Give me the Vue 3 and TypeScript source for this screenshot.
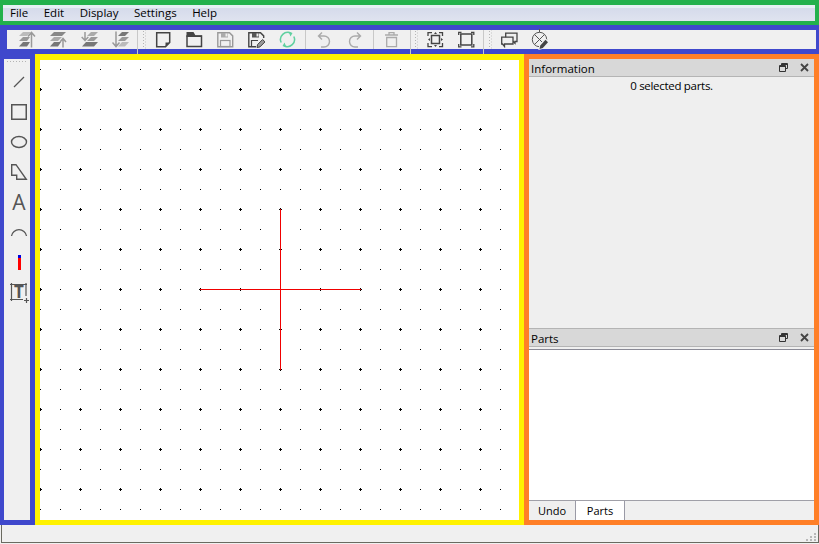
<script setup lang="ts">
import { computed } from 'vue'

const menus = ['File', 'Edit', 'Display', 'Settings', 'Help']

const gridPath = computed(() => {
  const parts: string[] = []
  for (let y = 69; y <= 509; y += 20) {
    for (let x = 40; x <= 500; x += 20) {
      const px = x - 40
      const py = y - 60
      const big = (y - 89) % 40 === 0 && (x - 40) % 40 === 0 && x <= 480
      if (big) {
        parts.push(`M${px - 1} ${py}h3v1h-3zM${px} ${py - 1}h1v3h-1z`)
      } else {
        parts.push(`M${px} ${py}h1v1h-1z`)
      }
    }
  }
  return parts.join('')
})
</script>

<template>
  <div class="app">
    <nav class="menubar">
      <span v-for="m in menus" :key="m" class="menu-item">{{ m }}</span>
    </nav>

    <div class="toolbar">
      <span class="btn"><svg viewBox="0 0 17 17"><path d="M4 1h8l-4 4H0z" fill="#bbb"/><path d="M4 6h7l-3 4H0z" fill="#999"/><path d="M4 11h7l-3 4.500H0z" fill="#777"/><path d="M12.500 16.500V1.500M9 5.500l3.500-4 3.500 4" fill="none" stroke="#999" stroke-width="1.500"/></svg></span>
      <span class="btn"><svg viewBox="0 0 17 17"><path d="M4 1h12l-4 4H0z" fill="#888"/><path d="M4 6h8l-4 4H0z" fill="#aaa"/><path d="M4 11h7l-3 4.500H0z" fill="#777"/><path d="M13 16.500V7.500M10 11l3-3.500 3 3.500" fill="none" stroke="#999" stroke-width="1.500"/></svg></span>
      <span class="btn"><svg viewBox="0 0 17 17"><path d="M10 1h7l-4 4H6z" fill="#aaa"/><path d="M10 6h7l-4 4H6z" fill="#999"/><path d="M5 11h12l-4 4.500H1z" fill="#777"/><path d="M4 1v8.500M.7 6 4 9.500 7.300 6" fill="none" stroke="#999" stroke-width="1.500"/></svg></span>
      <span class="btn"><svg viewBox="0 0 17 17"><path d="M10 1h7l-4 4H6z" fill="#777"/><path d="M10 6h7l-4 4H6z" fill="#999"/><path d="M10 11h7l-4 4.500H6z" fill="#bbb"/><path d="M4 .5v15M.5 11.500 4 15.500l3.500-4" fill="none" stroke="#999" stroke-width="1.500"/></svg></span>
      <i class="sep long first"></i>
      <i class="handle h10"></i>
      <span class="btn"><svg viewBox="0 0 17 17"><path d="M1.700 1.700H14.700V11.500L10.500 15.700H1.700Z" fill="none" stroke="#444" stroke-width="1.500"/><path d="M10.500 15.500V11.500H14.500Z" fill="#444"/></svg></span>
      <span class="btn"><svg viewBox="0 0 17 17"><path d="M.5 1h7l2 3.500h6.500V6H.5z" fill="#444"/><rect x="1" y="5" width="14.500" height="10.500" fill="none" stroke="#444" stroke-width="1.500"/></svg></span>
      <span class="btn"><svg viewBox="0 0 17 17"><path d="M.8 1.700H12.500L15.700 4.900V15.700H.8Z" fill="none" stroke="#999" stroke-width="1.400"/><rect x="4" y="2" width="7" height="4.500" fill="#aaa"/><rect x="8.500" y="2.500" width="2" height="3" fill="#eee"/><rect x="3.500" y="9.500" width="9.500" height="6" fill="none" stroke="#999" stroke-width="1.200"/></svg></span>
      <span class="btn"><svg viewBox="0 0 17 17"><path d="M8 15.700H.8V1.700H12.500L15.700 4.900V7" fill="none" stroke="#444" stroke-width="1.400"/><rect x="4" y="2" width="7" height="4.500" fill="#555"/><rect x="8.500" y="2.500" width="2" height="3" fill="#eee"/><path d="M3.500 15V9.500H10" fill="none" stroke="#444" stroke-width="1.200"/><path d="M9 16.500l.6-3 5-5 2.400 2.400-5 5z" fill="#999" stroke="#444"/></svg></span>
      <span class="btn"><svg viewBox="0 0 17 17"><g fill="none" stroke="#5fd0a0" stroke-width="1.500"><path d="M2.200 11.500A7 7 0 0 1 12 2.400"/><path d="M14.800 5.500A7 7 0 0 1 5 14.600"/></g><path d="M9.500 .5 13.500 2l-2 3.500zM7.500 16.500 3.500 15l2-3.500z" fill="#5fd0a0"/></svg></span>
      <i class="sep short a"></i>
      <span class="btn"><svg viewBox="0 0 17 17"><path d="M7 1.500 3.500 5 7 8.500M3.500 5H9A5.500 5.500 0 0 1 9 16H6" fill="none" stroke="#aaa" stroke-width="1.400"/></svg></span>
      <span class="btn"><svg viewBox="0 0 17 17"><path transform="translate(18 0) scale(-1 1)" d="M7 1.500 3.500 5 7 8.500M3.500 5H9A5.500 5.500 0 0 1 9 16H6" fill="none" stroke="#aaa" stroke-width="1.400"/></svg></span>
      <i class="sep short b"></i>
      <span class="btn"><svg viewBox="0 0 17 17"><g fill="none" stroke="#aaa" stroke-width="1.300"><path d="M2 4h13M6 3.500V1.700h5v1.800"/><path d="M3.700 6.500H13.500V15.700H3.700Z"/></g></svg></span>
      <i class="sep long c"></i>
      <i class="handle h9"></i>
      <span class="btn"><svg viewBox="0 0 17 17"><g fill="none" stroke="#444" stroke-width="1.300"><path d="M1 5V1.600H5M12 1.600H15.500V5M15.500 12V15.600H12M5 15.600H1V12"/><rect x="4.500" y="4.500" width="8" height="8" stroke-width="1.500"/></g><path d="M8.500 1l1.500 2H7zM8.500 16 7 14h3zM1 8.500l2-1.500v3zM16 8.500l-2-1.500v3z" fill="#444"/></svg></span>
      <span class="btn"><svg viewBox="0 0 17 17"><g fill="none" stroke="#444" stroke-width="1.300"><path d="M.7 4V1.300H3.500M13 1.300H15.800V4M15.800 13V15.800H13M3.500 15.800H.7V13"/><rect x="2.800" y="3" width="11" height="11" stroke-width="1.500"/></g></svg></span>
      <i class="sep long d"></i>
      <i class="handle h10"></i>
      <span class="btn"><svg viewBox="0 0 17 17"><g stroke="#444" stroke-width="1.300" fill="#f0f0f0"><path d="M4.700 2.200H16V10.500H14V12.300L12 10.500H4.700z"/><path d="M.7 6.200H12V13H3.500V15.500L1.500 13H.7z"/></g></svg></span>
      <span class="btn"><svg class="over" viewBox="0 0 17 17"><g fill="none" stroke="#555" stroke-width="1"><circle cx="7.500" cy="8.500" r="7.200"/><path d="M2.500 3.500 12.500 13.500M12.500 3.500 2.500 13.500M7.500 1.300V-2"/></g><path d="M6.300 19 7.300 14 13.500 7.200 17.500 11 11.300 17.800Z" fill="#f0f0f0"/><path d="M7.500 18 8.300 14.500 13.500 8.800 16 11.200 10.800 16.900Z" fill="#444"/></svg></span>
    </div>

    <main class="workspace">
      <aside class="toolbox">
        <i class="tool-handle"></i>
        <span class="tool"><svg viewBox="0 0 20 20"><path d="M5 15 15 5" stroke="#555" stroke-width="1.200"/></svg></span>
        <span class="tool"><svg viewBox="0 0 20 20"><rect x="2.750" y="2.750" width="14.500" height="14.500" fill="none" stroke="#555" stroke-width="1.500"/></svg></span>
        <span class="tool"><svg viewBox="0 0 20 20"><ellipse cx="10" cy="10" rx="7.500" ry="5.500" fill="none" stroke="#555" stroke-width="1.400"/></svg></span>
        <span class="tool"><svg viewBox="0 0 20 20"><path d="M2.700 2.700H7L17.300 17.300H7.700V13.300H2.700Z" fill="none" stroke="#555" stroke-width="1.400"/></svg></span>
        <span class="tool glyph">A</span>
        <span class="tool"><svg viewBox="0 0 20 20"><path d="M2.500 14A7.600 7.600 0 0 1 17.500 14" fill="none" stroke="#555" stroke-width="1.300"/></svg></span>
        <span class="tool"><svg viewBox="0 0 20 20"><rect x="9" y="3" width="3" height="3" fill="#0000e0"/><rect x="9" y="6" width="3" height="12" fill="#ff0000"/></svg></span>
        <span class="tool tool-text">
          <svg viewBox="0 0 20 20"><path d="M2.500 1V19M1 2.500H18M17 1V14M1 17.500H14M15 18.500H20M17.500 16V21" fill="none" stroke="#555" stroke-width="1.200"/></svg>
          <b class="t-letter">T</b>
        </span>
      </aside>

      <section class="canvas">
        <svg class="grid" width="479" height="460" viewBox="0 0 479 460" shape-rendering="crispEdges">
          <path :d="gridPath" fill="#000"/>
          <rect x="240" y="149" width="1" height="161" fill="#f00000"/>
          <rect x="160" y="229" width="161" height="1" fill="#f00000"/>
        </svg>
      </section>

      <aside class="docks">
        <header class="dock-title">
          <span>Information</span>
          <span class="dock-icons">
            <svg viewBox="0 0 9 9"><path d="M2.500 2.500V.5H8.500V5.500H6.500M.5 2.500H6.500V8.500H.5ZM.5 3.500H6.500M2.500 1.500H8.500" fill="none" stroke="#333"/></svg>
            <svg viewBox="0 0 9 9"><path d="M1 1 8 8M8 1 1 8" stroke="#444" stroke-width="1.800"/></svg>
          </span>
        </header>
        <div class="info">0 selected parts.</div>
        <header class="dock-title parts-title">
          <span>Parts</span>
          <span class="dock-icons">
            <svg viewBox="0 0 9 9"><path d="M2.500 2.500V.5H8.500V5.500H6.500M.5 2.500H6.500V8.500H.5ZM.5 3.500H6.500M2.500 1.500H8.500" fill="none" stroke="#333"/></svg>
            <svg viewBox="0 0 9 9"><path d="M1 1 8 8M8 1 1 8" stroke="#444" stroke-width="1.800"/></svg>
          </span>
        </header>
        <div class="parts"></div>
        <div class="tabs">
          <span class="tab">Undo</span>
          <span class="tab active">Parts</span>
        </div>
      </aside>
    </main>

    <footer class="status">
      <svg class="grip" width="12" height="9" viewBox="0 0 12 9"><path d="M9 0h2v2H9zM5 3h2v2H5zM9 3h2v2H9zM1 6h2v2H1zM5 6h2v2H5zM9 6h2v2H9z" fill="#b8b8b8"/></svg>
    </footer>
  </div>
</template>

<style>
html, body { margin: 0; background: #f0f0f0; }
</style>

<style scoped>
.app {
  width: 819px;
  height: 544px;
  overflow: hidden;
  display: flex;
  flex-direction: column;
  background: #f0f0f0;
  font-family: "Open Sans", "Noto Sans", sans-serif;
  font-size: 11.5px;
  color: #000;
}
.menubar {
  box-sizing: border-box;
  height: 25px;
  display: flex;
  align-items: center;
  gap: 15.5px;
  padding-left: 7px;
  border: solid #22b14c;
  border-width: 5px 4px 4px 3px;
  background: linear-gradient(#e4f0f3 0, #e4f0f3 3px, #d5dbeb 3px, #dfe3ef 100%);
  line-height: 16px;
}
.toolbar {
  box-sizing: border-box;
  height: 29px;
  display: flex;
  padding-left: 5px;
  border: solid #3f48cc;
  border-width: 5px 3px 5px 7px;
  background: #f0f0f0;
}
.btn {
  flex: none;
  width: 31px;
  height: 19px;
  display: flex;
  align-items: center;
  justify-content: center;
}
.btn svg { width: 17px; height: 17px; display: block; }
.btn svg.over { overflow: visible; position: relative; }
.sep { flex: none; width: 1px; background: #c8c8c8; }
.sep.long { margin-bottom: -5px; position: relative; }
.sep.first { margin-left: 1px; }
.sep.a { margin: 0 2px; }
.sep.b { margin: 0 2px 0 3px; }
.sep.c { margin-left: 3px; }
.sep.d { margin-left: 1px; }
.handle {
  flex: none;
  box-sizing: border-box;
  background-image:
    radial-gradient(#b4b4b4 0 1px, transparent 1px),
    radial-gradient(#c4c4c4 0 1px, transparent 1px);
  background-size: 3px 3px;
  background-repeat: repeat-y;
}
.handle.h10 { width: 10px; background-position: 4px 0, 5.500px 1.500px; }
.handle.h9 { width: 9px; background-position: 3px 0, 4.500px 1.500px; }
.workspace { flex: none; height: 471px; display: flex; }
.toolbox {
  box-sizing: border-box;
  width: 35px;
  display: flex;
  flex-direction: column;
  padding-left: 4px;
  border: solid #3f48cc;
  border-width: 5px 5px 5px 4px;
  background: #f0f0f0;
}
.tool-handle {
  display: block;
  height: 8px;
  margin-left: -2px;
  margin-right: 2px;
  background-image: radial-gradient(#b4b4b4 0 1px, transparent 1px);
  background-size: 3px 3px;
  background-repeat: repeat-x;
  background-position: 0 1px;
}
.tool {
  position: relative;
  height: 30px;
  width: 22px;
  display: flex;
  align-items: center;
  justify-content: center;
  flex: none;
}
.tool svg { width: 20px; height: 20px; display: block; overflow: visible; }
.glyph { font-size: 21px; color: #555; line-height: 30px; }
.t-letter {
  position: absolute;
  left: 5px;
  top: 5px;
  width: 12px;
  text-align: center;
  font-size: 17px;
  line-height: 20px;
  font-weight: 700;
  color: #555;
}
.canvas {
  box-sizing: border-box;
  width: 489px;
  border: solid #fff200;
  border-width: 6px 5px 5px 5px;
  background: #fff;
  overflow: hidden;
}
.grid { display: block; }
.docks {
  box-sizing: border-box;
  width: 295px;
  display: flex;
  flex-direction: column;
  border: 5px solid #ff7f27;
  background: #f0f0f0;
}
.dock-title {
  flex: none;
  box-sizing: border-box;
  height: 18px;
  display: flex;
  align-items: center;
  justify-content: space-between;
  padding: 1px 0 0 2px;
  background: #d8d8d8;
  border-bottom: 1px solid #b4b4b4;
  line-height: 17px;
}
.dock-icons { display: flex; gap: 12px; margin-right: 5px; margin-top: -1px; }
.dock-icons svg { width: 9px; height: 9px; display: block; }
.info {
  flex: none;
  height: 251px;
  text-align: center;
  line-height: 18px;
  letter-spacing: -.3px;
  background: #efefef;
}
.parts-title { height: 19px; border-top: 1px solid #b4b4b4; }
.parts {
  flex: none;
  box-sizing: border-box;
  height: 152px;
  background: #fff;
  border-top: 1px solid #8a8a96;
  margin-top: 2px;
  border-bottom: 1px solid #a0a0a8;
}
.tabs { flex: 1; display: flex; align-items: stretch; }
.tab {
  box-sizing: border-box;
  width: 46px;
  text-align: center;
  line-height: 19px;
  font-size: 11px;
  background: #efefef;
}
.tab.active {
  width: 50px;
  background: #fff;
  border: solid #9a9aa6;
  border-width: 0 1px;
}
.status {
  flex: none;
  box-sizing: border-box;
  height: 18px;
  margin-left: 1px;
  display: flex;
  align-items: flex-end;
  justify-content: flex-end;
  border-left: 1px solid #6a6a60;
  border-right: 1px solid #6a6a60;
  border-bottom: 1px solid #6a6a60;
  background: #f0f0f0;
}
.grip { display: block; margin-right: 1px; }
</style>
